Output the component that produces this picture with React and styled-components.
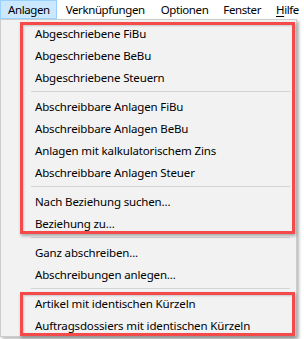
import React from "react";
import styled, { createGlobalStyle } from "styled-components";

const Global = createGlobalStyle`
  html, body { margin: 0; padding: 0; background: #ffffff; overflow: hidden; }
  body {
    font-family: "Noto Sans", "Segoe UI", sans-serif;
    font-size: 11.5px;
    letter-spacing: -0.15px;
    color: #000;
  }
`;

const Window = styled.div`
  width: 304px;
  height: 339px;
  position: relative;
  background: #ffffff;
  overflow: hidden;
`;

const MenuBar = styled.div`
  display: flex;
  height: 19px;
  align-items: stretch;
  background: #ffffff;
  white-space: nowrap;
  letter-spacing: -0.4px;
`;

const MenuTitle = styled.div`
  display: flex;
  align-items: center;
  flex-shrink: 0;
  padding: 0 6px 1px 7px;
  white-space: nowrap;
  box-sizing: border-box;
  border: 1px solid ${(p) => (p.$open ? "#99d1ff" : "transparent")};
  background: ${(p) => (p.$open ? "#cce8ff" : "transparent")};
  margin-right: ${(p) => p.$gap || 0}px;
  u { text-decoration: underline; text-underline-offset: 2px; }
`;

const Dropdown = styled.div`
  width: 297px;
  box-sizing: border-box;
  background: #f2f2f2;
  border: 1px solid #cccccc;
  box-shadow: 2px 2px 3px rgba(0, 0, 0, 0.28);
  padding: 2px 0 0;
`;

const Group = styled.div`
  position: relative;
  &::after {
    content: "";
    display: ${(p) => (p.$marked ? "block" : "none")};
    position: absolute;
    left: 19px;
    right: 1px;
    top: 0;
    bottom: 0;
    border: 3px solid #f54a4a;
    box-shadow: 1px 2px 3px rgba(0, 0, 0, 0.3), inset 1px 1px 2px rgba(0, 0, 0, 0.18);
    pointer-events: none;
  }
`;

const Item = styled.div`
  height: 22px;
  display: flex;
  align-items: center;
  padding-left: 34px;
  white-space: nowrap;
`;

const Separator = styled.div`
  height: 7px;
  display: flex;
  align-items: center;
  padding-left: 30px;
  padding-right: 6px;
  &::before {
    content: "";
    flex: 1;
    height: 1px;
    background: #d4d4d4;
  }
`;

const groups = [
  {
    marked: true,
    items: [
      "Abgeschriebene FiBu",
      "Abgeschriebene BeBu",
      "Abgeschriebene Steuern",
      "-",
      "Abschreibbare Anlagen FiBu",
      "Abschreibbare Anlagen BeBu",
      "Anlagen mit kalkulatorischem Zins",
      "Abschreibbare Anlagen Steuer",
      "-",
      "Nach Beziehung suchen...",
      "Beziehung zu...",
    ],
  },
  { sep: true },
  { marked: false, items: ["Ganz abschreiben...", "Abschreibungen anlegen..."] },
  { sep: true },
  {
    marked: true,
    items: ["Artikel mit identischen Kürzeln", "Auftragsdossiers mit identischen Kürzeln"],
  },
];

export default function App() {
  return (
    <Window>
      <Global />
      <MenuBar>
        <MenuTitle $open $gap={1}>Anlagen</MenuTitle>
        <MenuTitle $gap={1}>Verknüpfungen</MenuTitle>
        <MenuTitle>Optionen</MenuTitle>
        <MenuTitle>Fenster</MenuTitle>
        <MenuTitle>
          <span><u>H</u>ilfe</span>
        </MenuTitle>
      </MenuBar>
      <Dropdown>
        {groups.map((g, i) =>
          g.sep ? (
            <Separator key={i} />
          ) : (
            <Group key={i} $marked={g.marked}>
              {g.items.map((t, j) =>
                t === "-" ? <Separator key={j} /> : <Item key={j}>{t}</Item>
              )}
            </Group>
          )
        )}
      </Dropdown>
    </Window>
  );
}
